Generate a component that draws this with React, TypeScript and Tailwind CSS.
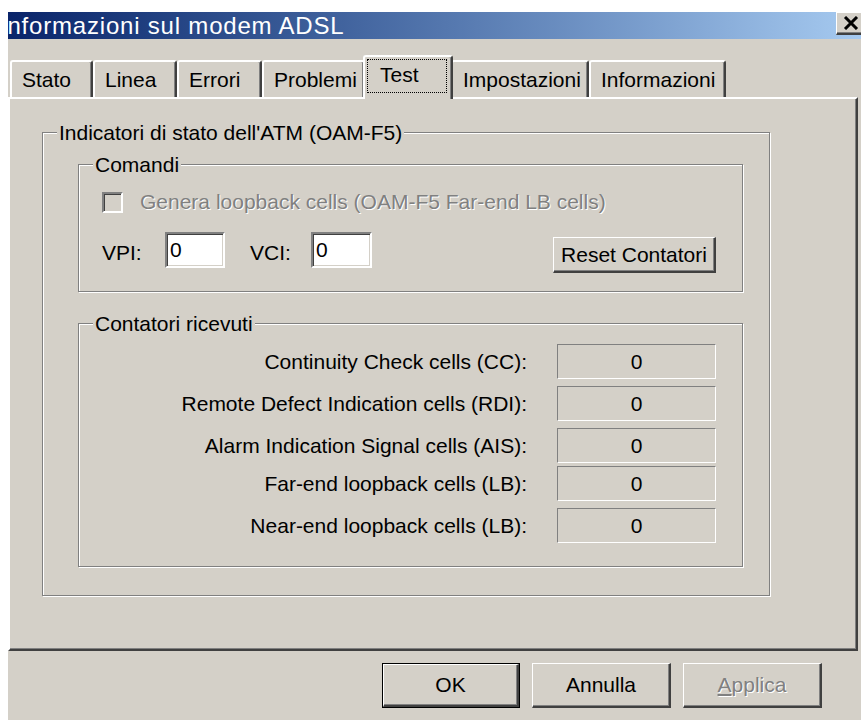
import type { ReactNode } from "react";

const raised =
    "bg-[#D4D0C8] border-t border-l border-r-2 border-b-2 border-t-white border-l-white border-r-[#404040] border-b-[#404040] shadow-[inset_-1px_-1px_0_#808080]";
const sunken =
    "border-2 border-t-[#808080] border-l-[#808080] border-b-white border-r-white shadow-[inset_1px_1px_0_#404040,inset_-1px_-1px_0_#D4D0C8]";
const disabledText = "text-[#808080] [text-shadow:1px_1px_0_#fff]";

interface Tab {
    label: string;
    width: string;
}

const tabs: Tab[] = [
    { label: "Stato", width: "w-[83px]" },
    { label: "Linea", width: "w-[84px]" },
    { label: "Errori", width: "w-[85px]" },
    { label: "Problemi", width: "w-[103px]" },
    { label: "Test", width: "w-[90px]" },
    { label: "Impostazioni", width: "w-[138px]" },
    { label: "Informazioni", width: "w-[137px]" },
];

const activeTab = "Test";

const counters = [
    { label: "Continuity Check cells (CC):", gap: "mt-0" },
    { label: "Remote Defect Indication cells (RDI):", gap: "mt-[7px]" },
    { label: "Alarm Indication Signal cells (AIS):", gap: "mt-[7px]" },
    { label: "Far-end loopback cells (LB):", gap: "mt-[3px]" },
    { label: "Near-end loopback cells (LB):", gap: "mt-[7px]" },
];

function GroupBox({
    title,
    className,
    children,
}: {
    title: string;
    className: string;
    children?: ReactNode;
}) {
    return (
        <div
            className={`relative border border-[#808080] shadow-[inset_1px_1px_0_#fff,1px_1px_0_#fff] ${className}`}
        >
            <span className="absolute left-[14px] -top-[12px] bg-[#D4D0C8] px-[2px] leading-[24px] whitespace-nowrap">
                {title}
            </span>
            {children}
        </div>
    );
}

function TitleBar() {
    return (
        <div className="h-[27px] shrink-0 flex items-start overflow-hidden bg-linear-to-r from-[#0A246A] to-[#A6CAF0]">
            <span className="ml-[-8px] text-white text-[24px] leading-[27px] tracking-[0.8px] whitespace-nowrap">
                Informazioni sul modem ADSL
            </span>
            <div
                className={`ml-auto mr-[-7px] w-[32px] h-[23px] shrink-0 flex items-center pl-[6px] ${raised}`}
            >
                <svg width="16" height="14" viewBox="0 0 16 14">
                    <path
                        d="M2 1 L14 13 M14 1 L2 13"
                        stroke="#000"
                        strokeWidth="3"
                        fill="none"
                    />
                </svg>
            </div>
        </div>
    );
}

function TabStrip() {
    return (
        <div className="h-[58px] shrink-0 flex items-end pl-[2px]">
            {tabs.map((tab) =>
                tab.label === activeTab ? (
                    <div
                        key={tab.label}
                        className={`${tab.width} relative z-10 -mx-[2px] -mb-[2px] h-[44px] bg-[#D4D0C8] rounded-t-[3px] border-t-2 border-l-2 border-r-2 border-t-white border-l-white border-r-[#404040] shadow-[inset_-1px_0_0_#808080] pt-[2px] pl-[2px]`}
                    >
                        <div className="w-[80px] h-[34px] border border-dotted border-black pt-[3px] pl-[12px] leading-[24px]">
                            {tab.label}
                        </div>
                    </div>
                ) : (
                    <div
                        key={tab.label}
                        className={`${tab.width} h-[37px] rounded-t-[3px] border-t-2 border-l-2 border-r-2 border-t-white border-l-white border-r-[#404040] shadow-[inset_-1px_0_0_#808080] pt-[6px] pl-[10px] leading-[24px] whitespace-nowrap`}
                    >
                        {tab.label}
                    </div>
                )
            )}
        </div>
    );
}

function CommandsGroup() {
    return (
        <GroupBox title="Comandi" className="w-[665px] h-[128px] pt-[25px] pl-[23px] pr-[26px]">
            <div className="flex items-center h-[24px]">
                <div className={`w-[21px] h-[21px] bg-[#D4D0C8] ${sunken}`} />
                <span className={`ml-[17px] whitespace-nowrap ${disabledText}`}>
                    Genera loopback cells (OAM-F5 Far-end LB cells)
                </span>
            </div>
            <div className="flex items-start mt-[18px]">
                <span className="w-[63px] mt-[9px]">VPI:</span>
                <div className={`w-[60px] h-[36px] bg-white pl-[3px] flex items-center ${sunken}`}>
                    0
                </div>
                <span className="w-[86px] pl-[25px] mt-[9px]">VCI:</span>
                <div className={`w-[61px] h-[36px] bg-white pl-[3px] flex items-center ${sunken}`}>
                    0
                </div>
                <button
                    className={`ml-auto mt-[5px] w-[163px] h-[36px] flex items-center justify-center whitespace-nowrap ${raised}`}
                >
                    Reset Contatori
                </button>
            </div>
        </GroupBox>
    );
}

function CountersGroup() {
    return (
        <GroupBox
            title="Contatori ricevuti"
            className="mt-[31px] w-[665px] h-[244px] pt-[20px] pr-[26px]"
        >
            {counters.map((row) => (
                <div
                    key={row.label}
                    className={`flex justify-end items-center h-[35px] ${row.gap}`}
                >
                    <span className="whitespace-nowrap">{row.label}</span>
                    <div className="ml-[30px] w-[159px] h-[35px] flex items-center justify-center border border-t-[#808080] border-l-[#808080] border-b-white border-r-white">
                        0
                    </div>
                </div>
            ))}
        </GroupBox>
    );
}

function DialogButtons() {
    return (
        <div className="flex gap-[12px] pl-[374px] mt-[12px]">
            <div className="w-[138px] h-[45px] border border-black">
                <button className={`w-full h-full flex items-center justify-center ${raised}`}>
                    OK
                </button>
            </div>
            <button className={`w-[139px] h-[45px] flex items-center justify-center ${raised}`}>
                Annulla
            </button>
            <button
                className={`w-[139px] h-[45px] flex items-center justify-center ${raised} ${disabledText}`}
            >
                <span className="underline">A</span>pplica
            </button>
        </div>
    );
}

export default function App() {
    return (
        <div className="w-[861px] h-[720px] bg-white pt-[12px] pl-[8px] overflow-hidden font-['Liberation_Sans',Arial,sans-serif] text-[21px] leading-[24px] text-black">
            <div className="w-[853px] h-[708px] bg-[#D4D0C8] flex flex-col overflow-hidden">
                <TitleBar />
                <TabStrip />
                <div className="w-[850px] h-[554px] shrink-0 border-t-2 border-l-2 border-r-2 border-b-2 border-t-white border-l-white border-r-[#404040] border-b-[#404040] shadow-[inset_-1px_-1px_0_#808080] pt-[33px] pl-[32px]">
                    <GroupBox
                        title="Indicatori di stato dell'ATM (OAM-F5)"
                        className="w-[728px] h-[464px] pt-[31px] pl-[35px]"
                    >
                        <CommandsGroup />
                        <CountersGroup />
                    </GroupBox>
                </div>
                <DialogButtons />
            </div>
        </div>
    );
}
